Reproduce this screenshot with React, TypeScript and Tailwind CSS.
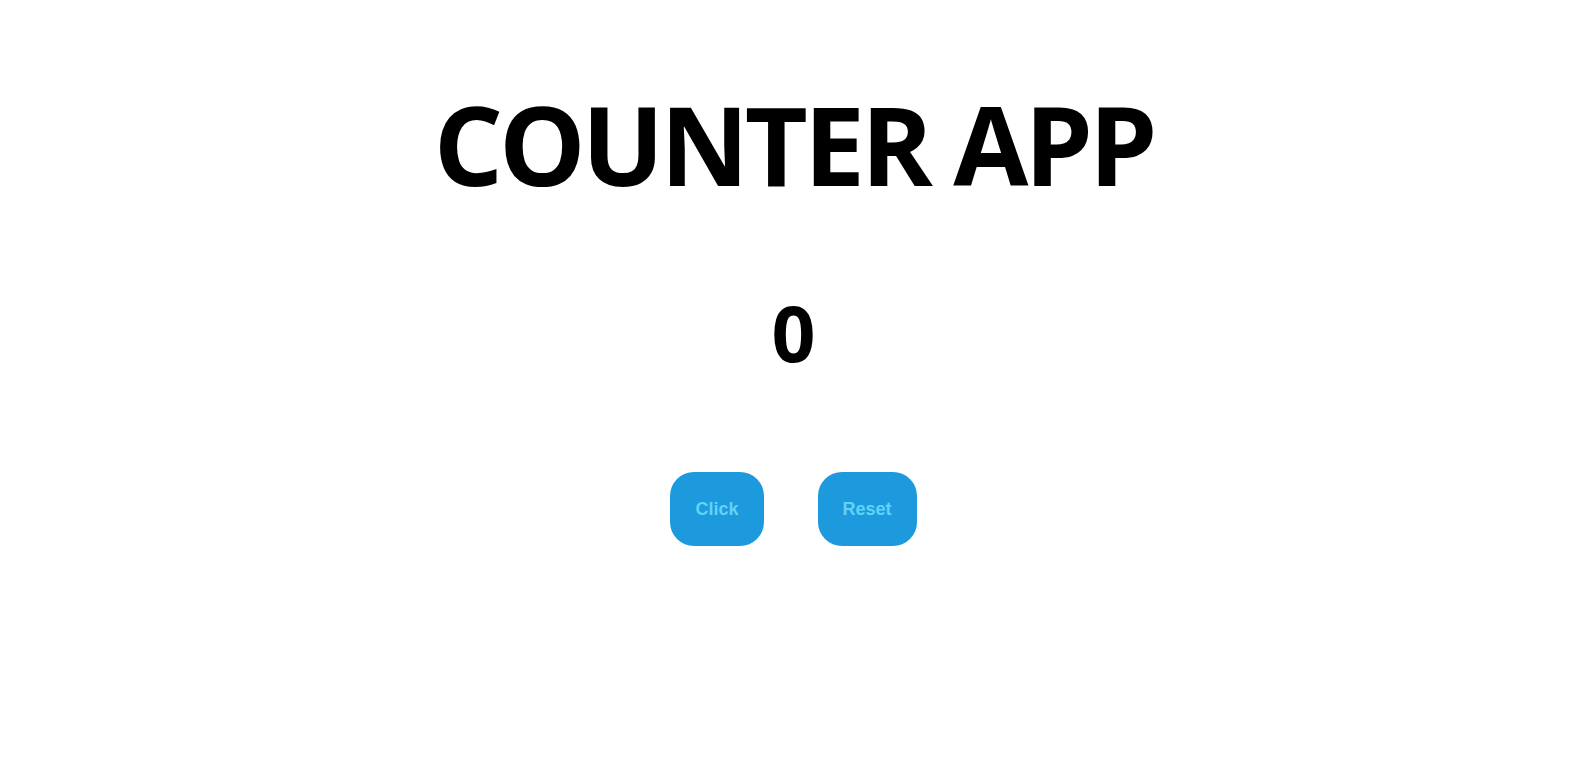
import React, { useState } from "react";

export default function App() {
  const [count, setCount] = useState(0);
  return (
    <div className="min-h-screen w-full bg-white flex flex-col items-center pt-[89px] pr-[6px]">
      <h1 className="font-['Open_Sans',sans-serif] font-bold text-[109px] leading-none text-black tracking-[-4px]">
        COUNTER APP
      </h1>
      <div className="mt-[96px] font-['Open_Sans',sans-serif] font-bold text-[77px] leading-none text-black">
        {count}
      </div>
      <div className="mt-[101px] flex gap-[54px]">
        <button
          onClick={() => setCount(count + 1)}
          className="h-[74px] px-[25px] rounded-[24px] bg-[#1d9ade] text-[#62d2f7] font-['Liberation_Sans',Arial,sans-serif] font-bold text-[18px]"
        >
          Click
        </button>
        <button
          onClick={() => setCount(0)}
          className="h-[74px] px-[25px] rounded-[24px] bg-[#1d9ade] text-[#62d2f7] font-['Liberation_Sans',Arial,sans-serif] font-bold text-[18px]"
        >
          Reset
        </button>
      </div>
    </div>
  );
}
